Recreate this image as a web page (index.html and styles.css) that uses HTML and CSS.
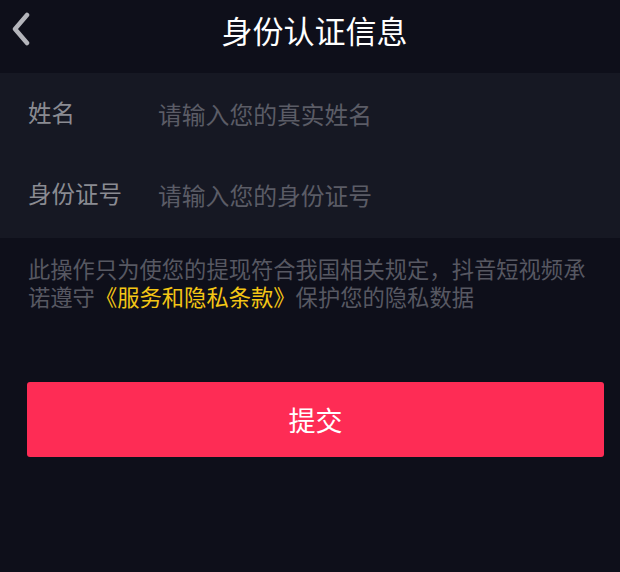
FILE: index.html
```html
<!DOCTYPE html>
<html lang="zh-CN">
<head>
<meta charset="utf-8">
<title>身份认证信息</title>
<link rel="stylesheet" href="styles.css">
</head>
<body>
<div class="page">
  <header class="nav">
    <a class="back" href="#" aria-label="返回">
      <svg width="22" height="34" viewBox="0 0 22 34"><path d="M17 3 L5 17 L17 31" fill="none" stroke="#b4b5bb" stroke-width="4.5" stroke-linecap="round" stroke-linejoin="round"/></svg>
    </a>
    <h1 class="title">身份认证信息</h1>
  </header>
  <section class="form">
    <div class="row">
      <span class="label">姓名</span>
      <input class="field" type="text" placeholder="请输入您的真实姓名">
    </div>
    <div class="row">
      <span class="label">身份证号</span>
      <input class="field" type="text" placeholder="请输入您的身份证号">
    </div>
  </section>
  <p class="notice">此操作只为使您的提现符合我国相关规定，抖音短视频承诺遵守<span class="link">《服务和隐私条款》</span>保护您的隐私数据</p>
  <div class="actions">
    <button class="submit" type="button">提交</button>
  </div>
</div>
</body>
</html>
```
FILE: styles.css
```css
html, body {
  margin: 0;
  padding: 0;
  background: #0e0f1a;
}
body {
  font-family: "Noto Sans CJK SC", "Noto Sans", sans-serif;
  width: 620px;
  height: 572px;
  overflow: hidden;
}
.page {
  display: flex;
  flex-direction: column;
}
.nav {
  position: relative;
  height: 73px;
  display: flex;
  align-items: center;
  justify-content: center;
}
.back {
  position: absolute;
  left: 10px;
  top: 12px;
  display: block;
  width: 22px;
  height: 34px;
}
.back svg { display: block; }
.title {
  margin: 0 0 14px 9px;
  font-size: 31px;
  font-weight: 400;
  color: #ffffff;
  line-height: 1;
}
.form {
  background: #161823;
  height: 165px;
  display: flex;
  flex-direction: column;
}
.row {
  height: 82px;
  display: flex;
  align-items: center;
  padding-left: 28px;
}
.row:first-child { height: 80px; }
.label {
  width: 130px;
  font-size: 23.5px;
  color: #8a8b92;
  line-height: 1;
}
.field {
  flex: 1;
  background: transparent;
  border: 0;
  outline: 0;
  padding: 0;
  font-family: inherit;
  font-size: 23.8px;
  color: #ffffff;
}
.field::placeholder { color: #5b5c66; }
.notice {
  margin: 16px 20px 0 28px;
  font-size: 22.3px;
  line-height: 28px;
  color: #575862;
}
.link {
  color: #f4c615;
}
.actions {
  padding: 72px 16px 0 27px;
}
.submit {
  width: 577px;
  height: 75px;
  border: 0;
  border-radius: 3px;
  background: #fe2c55;
  color: #ffffff;
  font-family: inherit;
  font-size: 27px;
  cursor: pointer;
}
```
